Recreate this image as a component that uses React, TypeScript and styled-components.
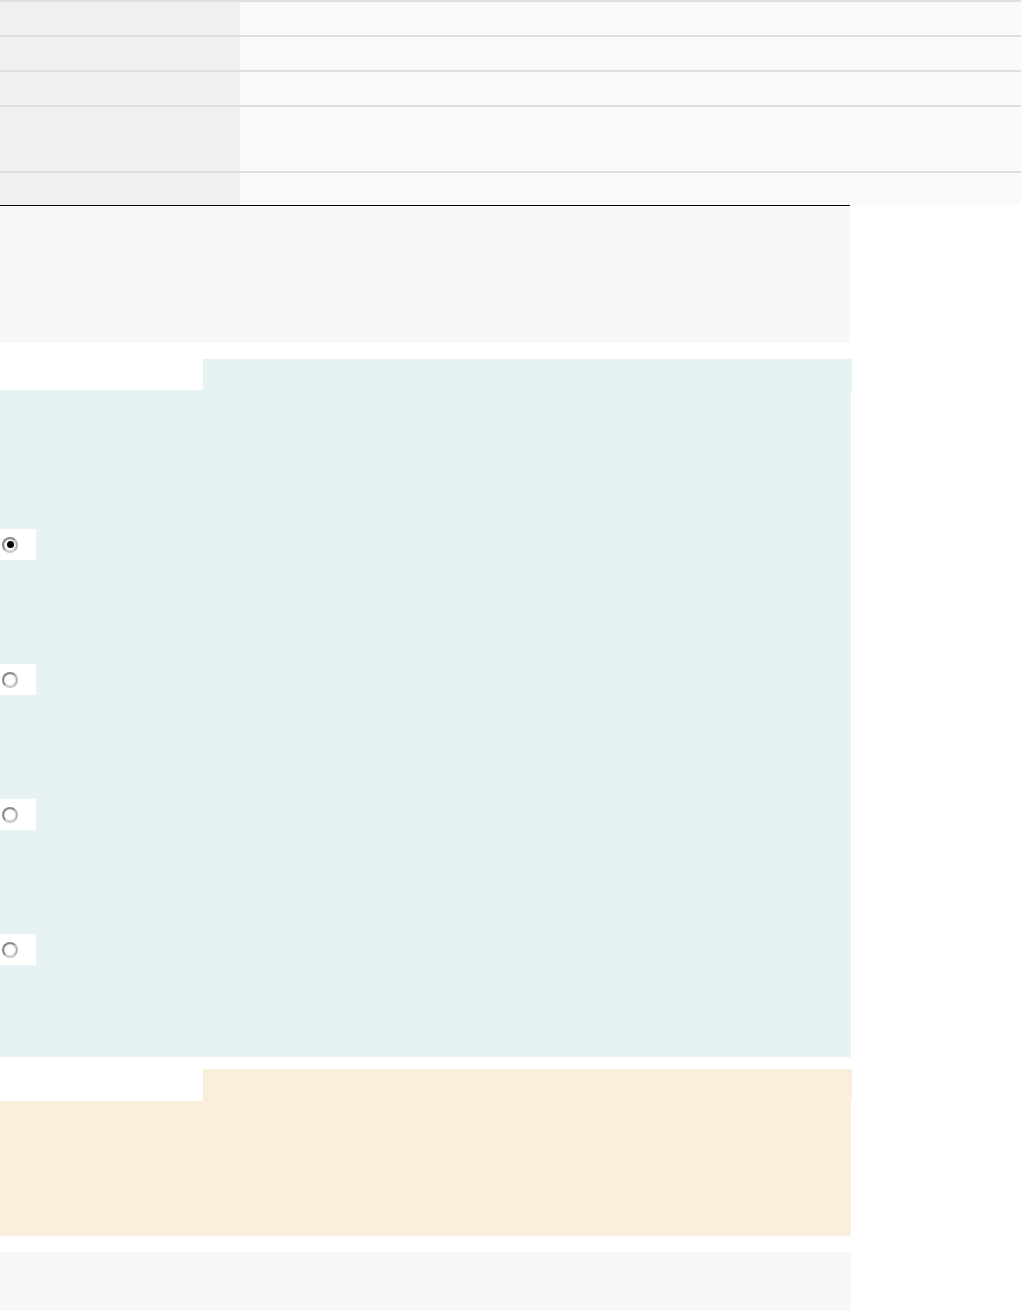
import styled, { createGlobalStyle } from "styled-components";

const GlobalStyle = createGlobalStyle`
  html, body {
    margin: 0;
    padding: 0;
    background: #fff;
    font-family: "Liberation Sans", Arial, sans-serif;
  }
`;

const InfoTable = styled.div`
  width: 100%;
  display: flex;
  flex-direction: column;
`;

const InfoRow = styled.div<{ h: number }>`
  display: grid;
  grid-template-columns: 240px 1fr;
  height: ${(p) => p.h}px;
  border-top: 2px solid #dde0e4;
`;

const KeyCell = styled.div`
  background: #f0f0f0;
`;

const ValueCell = styled.div`
  background: #fafafa;
`;

const Content = styled.div`
  width: 851px;
  display: flex;
  flex-direction: column;
`;

const Summary = styled.div`
  height: 137px;
  background: #f7f8fa;
  border-top: 1px solid #000;
  margin-right: 1px;
`;

const Panel = styled.div<{ top: number }>`
  margin-top: ${(p) => p.top}px;
  display: flex;
  flex-direction: column;
`;

const TabBar = styled.div<{ h: number }>`
  display: grid;
  grid-template-columns: 203px 1fr;
  height: ${(p) => p.h}px;
  margin-right: -1px;
`;

const Tab = styled.div<{ bg: string }>`
  background: ${(p) => p.bg};
`;

const PanelBody = styled.div<{ bg: string; h?: number }>`
  background: ${(p) => p.bg};
  ${(p) => (p.h ? `height: ${p.h}px;` : "")}
`;

const RadioList = styled.div`
  display: flex;
  flex-direction: column;
  gap: 104px;
  padding: 139px 0 92px;
`;

const RadioCell = styled.label`
  width: 36px;
  height: 31px;
  background: #fff;
  display: flex;
  align-items: center;
  padding-left: 2px;
  box-sizing: border-box;
`;

const RadioMark = styled.span<{ checked?: boolean }>`
  width: 16px;
  height: 16px;
  border-radius: 50%;
  box-sizing: border-box;
  border: 2px solid #8a8a8a;
  border-bottom-color: #c8c8c8;
  border-right-color: #b4b4b4;
  box-shadow: inset 0 0 0 1px #e2e2e2;
  background: #fff;
  display: flex;
  align-items: center;
  justify-content: center;
  &::after {
    content: "";
    display: ${(p) => (p.checked ? "block" : "none")};
    width: 7px;
    height: 7px;
    border-radius: 50%;
    background: #000;
  }
`;

const Footer = styled.div`
  margin-top: 16px;
  height: 59px;
  background: #f7f8fa;
`;

const rows = [33, 33, 33, 64, 32];
const options = [true, false, false, false];

export default function App() {
  return (
    <>
      <GlobalStyle />
      <InfoTable>
        {rows.map((h, i) => (
          <InfoRow key={i} h={h}>
            <KeyCell />
            <ValueCell />
          </InfoRow>
        ))}
      </InfoTable>
      <Content>
        <Summary />
        <Panel top={16}>
          <TabBar h={31}>
            <div />
            <Tab bg="#e6f2f4" />
          </TabBar>
          <PanelBody bg="#e6f2f4">
            <RadioList>
              {options.map((checked, i) => (
                <RadioCell key={i}>
                  <RadioMark checked={checked} />
                </RadioCell>
              ))}
            </RadioList>
          </PanelBody>
        </Panel>
        <Panel top={12}>
          <TabBar h={32}>
            <div />
            <Tab bg="#fbeedd" />
          </TabBar>
          <PanelBody bg="#fbeedd" h={135} />
        </Panel>
        <Footer />
      </Content>
    </>
  );
}
